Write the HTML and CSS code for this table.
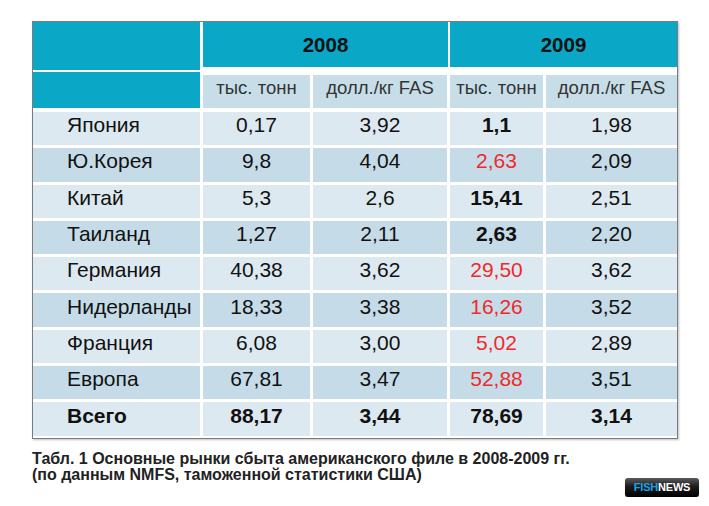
FILE: index.html
```html
<!DOCTYPE html>
<html lang="ru">
<head>
<meta charset="utf-8">
<title>Основные рынки сбыта американского филе</title>
<link rel="stylesheet" href="styles.css">
</head>
<body>
<div class="page">
  <div class="table">
    <div class="head">
      <div class="head-left">
        <div class="hl hl1"></div>
        <div class="hl hl2"></div>
      </div>
      <div class="head-right">
        <div class="year y2008">2008</div>
        <div class="year y2009">2009</div>
        <div class="sub">тыс. тонн</div>
        <div class="sub">долл./кг FAS</div>
        <div class="sub">тыс. тонн</div>
        <div class="sub">долл./кг FAS</div>
      </div>
    </div>
    <div class="rows">
      <div class="row light"><div class="name">Япония</div><div>0,17</div><div>3,92</div><div class="b">1,1</div><div>1,98</div></div>
      <div class="row dark"><div class="name">Ю.Корея</div><div>9,8</div><div>4,04</div><div class="red">2,63</div><div>2,09</div></div>
      <div class="row light"><div class="name">Китай</div><div>5,3</div><div>2,6</div><div class="b">15,41</div><div>2,51</div></div>
      <div class="row dark"><div class="name">Таиланд</div><div>1,27</div><div>2,11</div><div class="b">2,63</div><div>2,20</div></div>
      <div class="row light"><div class="name">Германия</div><div>40,38</div><div>3,62</div><div class="red">29,50</div><div>3,62</div></div>
      <div class="row dark"><div class="name">Нидерланды</div><div>18,33</div><div>3,38</div><div class="red">16,26</div><div>3,52</div></div>
      <div class="row light"><div class="name">Франция</div><div>6,08</div><div>3,00</div><div class="red">5,02</div><div>2,89</div></div>
      <div class="row dark"><div class="name">Европа</div><div>67,81</div><div>3,47</div><div class="red">52,88</div><div>3,51</div></div>
      <div class="row light total"><div class="name">Всего</div><div>88,17</div><div>3,44</div><div>78,69</div><div>3,14</div></div>
    </div>
  </div>
  <div class="footer">
    <p class="caption">Табл. 1 Основные рынки сбыта американского филе в 2008-2009 гг.<br>(по данным NMFS, таможенной статистики США)</p>
    <div class="logo"><span class="fish">FISH</span><span class="news">NEWS</span></div>
  </div>
</div>
</body>
</html>
```

FILE: styles.css
```css
html, body {
  margin: 0;
  padding: 0;
  background: #ffffff;
}

.page {
  padding: 21px 0 0 32px;
  width: 667px;
  font-family: "Liberation Sans", Arial, sans-serif;
  color: #111;
}

.table {
  width: 644px;
  border: 1px solid #7b7b7b;
  background: #ffffff;
  box-shadow: 1px 1px 2px rgba(0, 0, 0, 0.25);
  display: flex;
  flex-direction: column;
  gap: 4px;
}

.head {
  display: flex;
  gap: 3px;
}

.head-left {
  width: 167px;
  display: flex;
  flex-direction: column;
  gap: 2px;
}

.hl {
  background: #0aa7c7;
}

.hl1 { height: 48px; }
.hl2 { height: 36px; }

.head-right {
  display: grid;
  grid-template-columns: 107px 134px 93px 131px;
  grid-template-rows: 45px 33px;
  column-gap: 3px;
  row-gap: 8px;
}

.year {
  grid-column: span 2;
  background: #0aa7c7;
  display: flex;
  align-items: center;
  justify-content: center;
  font-weight: bold;
  font-size: 20.5px;
  color: #111;
}

.y2008 { margin-right: -1px; }

.sub {
  background: #c7dee9;
  display: flex;
  align-items: center;
  justify-content: center;
  font-size: 18.5px;
  color: #333;
  padding-bottom: 7px;
  box-sizing: border-box;
}

.rows {
  display: flex;
  flex-direction: column;
  gap: 3px;
  padding-bottom: 2px;
}

.row {
  display: grid;
  grid-template-columns: 167px 107px 134px 93px 131px;
  column-gap: 3px;
  height: 33.3px;
  font-size: 21px;
}

.row > div {
  display: flex;
  align-items: center;
  justify-content: center;
  padding-bottom: 7px;
  box-sizing: border-box;
}

.row > .name {
  justify-content: flex-start;
  padding-left: 34px;
}

.light > div { background: #dde9f0; }
.dark > div { background: #c5dce8; }

.b { font-weight: bold; }
.red { color: #ee2a2a; }
.total > div { font-weight: bold; }

.footer {
  display: flex;
  flex-direction: column;
  margin-top: 12px;
}

.caption {
  margin: 0;
  font-size: 16px;
  line-height: 16px;
  font-weight: bold;
  color: #222;
}

.logo {
  align-self: flex-end;
  margin-top: -5px;
  width: 74px;
  height: 19px;
  border-radius: 3px;
  background: linear-gradient(#5a5a5a 0%, #1c1c1c 45%, #000 100%);
  display: flex;
  align-items: center;
  justify-content: center;
  font-size: 11px;
  font-weight: bold;
  letter-spacing: -0.2px;
  box-shadow: 0 1px 1px rgba(0,0,0,0.3);
}

.fish { color: #19a3e6; }
.news { color: #ffffff; }
```
